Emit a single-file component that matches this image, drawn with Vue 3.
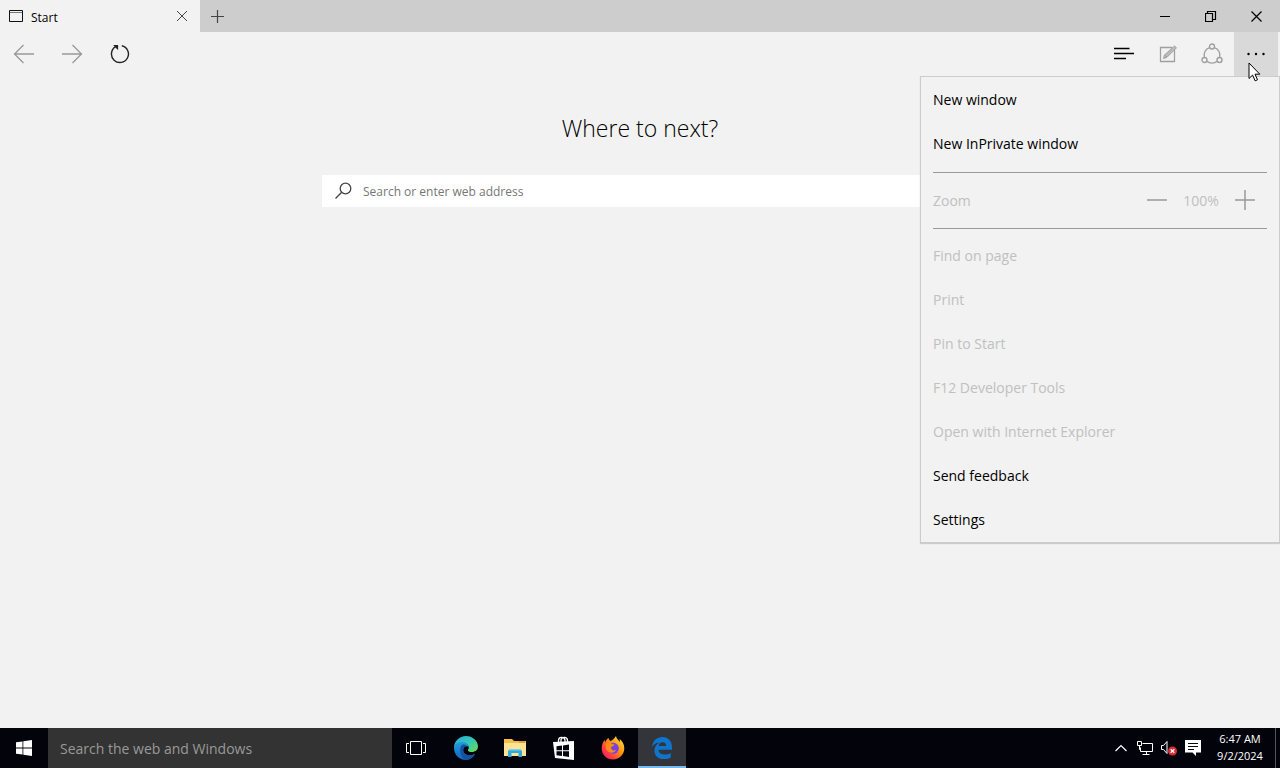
<template>
  <div class="desktop">
    <div class="titlebar">
      <div class="tab">
        <svg class="tab-icon" width="14" height="12" viewBox="0 0 14 12">
          <path d="M.5.5h13v11H.5z" fill="none" stroke="#111" />
          <path d="M1 2.500h12" stroke="#777" />
        </svg>
        <span class="tab-title">Start</span>
        <button class="tab-close" aria-label="Close tab">
          <svg width="12" height="12" viewBox="0 0 12 12"><path d="M1 1l10 10M11 1L1 11" fill="none" stroke="#444" /></svg>
        </button>
      </div>
      <button class="new-tab" aria-label="New tab">
        <svg width="13" height="13" viewBox="0 0 13 13"><path d="M6.500 0v13M0 6.500h13" stroke="#444" stroke-width="1.200" /></svg>
      </button>
      <div class="win-controls">
        <button aria-label="Minimize">
          <svg width="10" height="11" viewBox="0 0 10 11"><path d="M0 5.500h10" stroke="#000" /></svg>
        </button>
        <button aria-label="Restore">
          <svg width="12" height="11" viewBox="0 0 12 11">
            <path d="M.5 2.500h7v8h-7zM2.500 2.500v-2h8v8h-3" fill="none" stroke="#000" stroke-width="1.200" />
          </svg>
        </button>
        <button aria-label="Close">
          <svg width="12" height="11" viewBox="0 0 12 11"><path d="M.5.5l10 10M10.500.5l-10 10" stroke="#000" stroke-width="1.200" /></svg>
        </button>
      </div>
    </div>

    <div class="toolbar">
      <button class="nav" aria-label="Back" disabled>
        <svg width="22" height="20" viewBox="0 0 22 20"><path d="M21 10H1.500M10.500 1l-9 9 9 9" fill="none" stroke="#999" stroke-width="1.300" /></svg>
      </button>
      <button class="nav" aria-label="Forward" disabled>
        <svg width="22" height="20" viewBox="0 0 22 20"><path d="M1 10h19.500M11.500 1l9 9-9 9" fill="none" stroke="#999" stroke-width="1.300" /></svg>
      </button>
      <button class="nav" aria-label="Refresh">
        <svg width="20" height="20" viewBox="0 0 20 20">
          <path d="M11.800 1.700A8.500 8.500 0 1 1 5.600 2.700" fill="none" stroke="#222" stroke-width="1.400" />
          <path d="M3.200 1h4.900v4.900l-1.900-1.600z" fill="#222" />
        </svg>
      </button>
      <div class="tools">
        <button class="tool" aria-label="Hub">
          <svg width="20" height="16" viewBox="0 0 20 16"><path d="M0 2.500h15.500M0 7.500h20M0 12.500h12" stroke="#000" stroke-width="1.300" /></svg>
        </button>
        <button class="tool" aria-label="Make a Web Note" disabled>
          <svg width="18" height="18" viewBox="0 0 18 18" fill="none" stroke="#a0a0a0">
            <path d="M13 2.500H1.500v14h14V5" stroke-width="1.300" />
            <path d="M4.500 13.500l1-3.500L15.500 1l2 1.800L8 12.300z" fill="#bbb" />
            <path d="M5.500 10l2.500 2.300" />
          </svg>
        </button>
        <button class="tool" aria-label="Share" disabled>
          <svg width="22" height="22" viewBox="0 0 22 22" fill="none" stroke="#a0a0a0" stroke-width="1.400">
            <circle cx="11" cy="3.500" r="2.500" />
            <circle cx="3.500" cy="17" r="2.500" />
            <circle cx="18.500" cy="17" r="2.500" />
            <path d="M8.600 4.600A8 8 0 0 0 3.400 14.500M13.400 4.600a8 8 0 0 1 5.200 9.900M5.800 18.200a8 8 0 0 0 10.400 0" />
          </svg>
        </button>
        <div class="more">
          <button class="tool open" aria-label="More actions" aria-expanded="true">
            <svg width="18" height="4" viewBox="0 0 18 4">
              <circle cx="1.500" cy="2" r="1.200" /><circle cx="9" cy="2" r="1.200" /><circle cx="16.500" cy="2" r="1.200" />
            </svg>
          </button>
          <div class="menu">
            <template v-for="item in menuItems" :key="item.label">
              <div v-if="item.zoom" class="zoom">
                <span class="zoom-label">{{ item.label }}</span>
                <button aria-label="Zoom out" disabled>
                  <svg width="20" height="20" viewBox="0 0 20 20"><path d="M0 10h20" stroke="#999" stroke-width="1.500" /></svg>
                </button>
                <span class="zoom-value">100%</span>
                <button aria-label="Zoom in" disabled>
                  <svg width="20" height="20" viewBox="0 0 20 20"><path d="M0 10h20M10 0v20" stroke="#999" stroke-width="1.500" /></svg>
                </button>
              </div>
              <button v-else class="menu-item" :disabled="item.disabled">{{ item.label }}</button>
              <hr v-if="item.divider" />
            </template>
          </div>
          <svg class="cursor" width="13" height="20" viewBox="0 0 13 20">
            <path d="M1 1v15.500l3.600-3.400 2.500 5.700 2.400-1-2.500-5.600h4.800z" fill="#fff" stroke="#000" />
          </svg>
        </div>
      </div>
    </div>

    <main class="page">
      <h1>Where to next?</h1>
      <label class="address">
        <svg width="18" height="18" viewBox="0 0 18 18" fill="none" stroke="#444" stroke-width="1.300">
          <circle cx="11.500" cy="6.500" r="5.300" /><path d="M7.700 10.300L1.500 16.500" />
        </svg>
        <input type="text" placeholder="Search or enter web address" aria-label="Search or enter web address" />
      </label>
    </main>

    <div class="taskbar">
      <button class="start" aria-label="Start">
        <svg width="16" height="16" viewBox="0 0 16 16" fill="#fff">
          <path d="M0 2.300l6.500-.9v6.100H0zM7.300 1.300L16 0v7.500H7.300zM0 8.400h6.500v6.200L0 13.700zM7.300 8.400H16V16l-8.700-1.200z" />
        </svg>
      </button>
      <input class="task-search" type="text" placeholder="Search the web and Windows" aria-label="Search the web and Windows" />
      <div class="apps">
        <button class="app" aria-label="Task View">
          <svg width="22" height="16" viewBox="0 0 22 16" fill="none" stroke="#fff">
            <path d="M4.500 1.500h11v13h-11zM3 3.500H.5v9H3M17 3.500h2.500v9H17" />
          </svg>
        </button>
        <button class="app" aria-label="Microsoft Edge">
          <svg width="24" height="24" viewBox="0 0 24 24">
            <defs>
              <linearGradient id="edgeTop" x1="0" y1="0" x2="1" y2="1">
                <stop offset="0" stop-color="#25a9e0" /><stop offset=".5" stop-color="#35c8b4" /><stop offset="1" stop-color="#6fdc4b" />
              </linearGradient>
              <linearGradient id="edgeSide" x1="0" y1="0" x2="0" y2="1">
                <stop offset="0" stop-color="#209de0" /><stop offset="1" stop-color="#1265ba" />
              </linearGradient>
            </defs>
            <path d="M0 12C0 5 5.300 0 12 0s12 5 12 10.600c0 3.500-2.700 5.600-6 5.600-2.600 0-4.300-1-4.300-2 0-.7 1-1.200 1-2.900C14.700 9 12.500 7 9 7c-4.500 0-8 2.200-9 5z" fill="url(#edgeTop)" />
            <path d="M0 12c0-3.700 3.700-6 8-6 3.600 0 6.700 2 6.700 5-1-1.300-5.500-1-5.500 3.300 0 4.500 5.800 6.700 11.800 3.800C19 21.800 15.800 24 12 24 5 24 0 18.500 0 12z" fill="url(#edgeSide)" />
            <path d="M8.800 8.500C5 10.500 4.700 20.500 12 24c4 0 7-2.200 9-5.900-6 2.900-11.800.7-11.800-3.800 0-2.400 1.600-4 3.500-4.200-.7-1.100-2.300-1.800-3.900-1.600z" fill="#1552a0" />
            <path d="M10 12.300c.8-1.700 3-2 4.600-.9 0 1.500-.9 2-.9 2.800 0 1 1.700 2 4.300 2 1.500 0 2.800-.4 3.900-1.100-1 2.300-3.400 3.600-6.200 3.600-3.700 0-6.400-3-5.700-6.400z" fill="#03030c" />
          </svg>
        </button>
        <button class="app" aria-label="File Explorer">
          <svg width="22" height="20" viewBox="0 0 22 20">
            <path d="M0 1h8l2 2h12v15H0z" fill="#f5bf4a" />
            <path d="M0 5h22v13H0z" fill="#ffe394" />
            <path d="M15 3h6v2h-6z" fill="#eb9a35" />
            <path d="M4 19v-6l2-2h10l2 2v6h-3.500v-4h-7v4z" fill="#32a9de" />
            <path d="M6 11h10l1.500 1.500h-13z" fill="#78d2ef" />
          </svg>
        </button>
        <button class="app" aria-label="Store">
          <svg width="22" height="24" viewBox="0 0 22 24">
            <path d="M5.500 7V4.500C5.500.5 11 .3 12 4v3M8 6V3.500C9.500 0 14.500 1 14.500 4.500V6" fill="none" stroke="#fff" stroke-width="1.300" />
            <path d="M0 6l21-1v19L2 22z" fill="#fff" />
            <path d="M3.500 10.300l5.500-.7v4.700H3.500zM10 9.400l6-.8v5.700h-6zM3.500 15.200H9v4.700l-5.500-.7zM10 15.200h6v5.700l-6-.8z" fill="#050510" />
          </svg>
        </button>
        <button class="app" aria-label="Firefox">
          <svg width="24" height="24" viewBox="0 0 24 24">
            <defs>
              <linearGradient id="fox" x1="1" y1="0" x2="0" y2="1">
                <stop offset="0" stop-color="#fff44f" /><stop offset=".4" stop-color="#ff980e" /><stop offset=".75" stop-color="#ff3647" /><stop offset="1" stop-color="#e31587" />
              </linearGradient>
            </defs>
            <path d="M15 0c0 2.200 2.500 3.600 3.500 6 .5-1 .5-2-.1-3.300C21.500 5 23.300 8.500 23.300 12.300 23.300 18.700 18.300 23.500 12 23.500S.7 18.700.7 12.500C.7 9 2 6 3.700 3.800L4 6.500C5 5 5.600 3.300 7.500 1.800c0 1.500 1 2.700 2.300 3.200 1.400-.4 3.500-2.700 5.200-5z" fill="url(#fox)" />
            <circle cx="12.300" cy="12.300" r="5.500" fill="#7542e5" />
            <path d="M5 8c2-1.700 4.500-1.500 6 0l2.500.5c-.5 1.500-2.300 1.700-3.300 2.500-.5 3 2.700 4.500 5 2.500-1.200 4-7.700 4.800-10-.5z" fill="#ff8a16" />
          </svg>
        </button>
        <button class="app active" aria-label="Edge, Start">
          <svg width="22" height="22" viewBox="0 0 22 22">
            <path d="M1 10C1.800 3.500 6 0 11.400 0 17.500 0 21 4.500 21 10v2.700H7.500c.2 3.300 3 4.900 6.400 4.900 2.200 0 4-.6 5.900-1.700v4.500c-2 1.100-4.500 1.600-7.200 1.600C7 22 3.400 18.600 3.400 13.700c0-3.700 2-6.500 5-8.100C4.500 6 2.200 8 1 10zm6.600-1.100h7.500c0-2.300-1-3.600-3.400-3.600-2.200 0-3.700 1.500-4.100 3.600z" fill="#0f74cc" />
          </svg>
        </button>
      </div>
      <div class="tray">
        <button class="tray-icon" aria-label="Show hidden icons">
          <svg width="12" height="8" viewBox="0 0 12 8"><path d="M.5 7L6 1.500 11.500 7" fill="none" stroke="#fff" stroke-width="1.200" /></svg>
        </button>
        <button class="tray-icon" aria-label="Network">
          <svg width="16" height="14" viewBox="0 0 16 14" fill="none" stroke="#fff">
            <path d="M5.500 2.500h10v8H3.500v-4M9.500 10.500v3M5.500 13.500h7M.5.500h4v4h-4zM2.500 4.500v4h1" />
          </svg>
        </button>
        <button class="tray-icon" aria-label="Volume">
          <svg width="16" height="16" viewBox="0 0 16 16">
            <path d="M.5 5.500h2l3.500-4v12l-3.500-4h-2z" fill="none" stroke="#fff" />
            <circle cx="11.500" cy="11" r="4.500" fill="#d92c35" />
            <path d="M9.700 9.200l3.600 3.600M13.300 9.200l-3.600 3.600" stroke="#fff" stroke-width="1.300" />
          </svg>
        </button>
        <button class="tray-icon" aria-label="Notifications">
          <svg width="16" height="16" viewBox="0 0 16 16">
            <path d="M0 0h16v12.500h-5V16l-3.500-3.500H0z" fill="#fff" />
            <path d="M3 3.500h10M3 6.500h10M3 9.500h6" stroke="#08080f" />
          </svg>
        </button>
        <button class="clock"><span>6:47 AM</span><span>9/2/2024</span></button>
        <button class="show-desktop" aria-label="Show desktop"></button>
      </div>
    </div>
  </div>
</template>

<script setup>
const menuItems = [
  { label: 'New window' },
  { label: 'New InPrivate window', divider: true },
  { label: 'Zoom', zoom: true, divider: true },
  { label: 'Find on page', disabled: true },
  { label: 'Print', disabled: true },
  { label: 'Pin to Start', disabled: true },
  { label: 'F12 Developer Tools', disabled: true },
  { label: 'Open with Internet Explorer', disabled: true },
  { label: 'Send feedback' },
  { label: 'Settings' },
];
</script>

<style>
body {
  margin: 0;
}
</style>

<style scoped>
.desktop {
  display: flex;
  flex-direction: column;
  min-height: 100vh;
  background: #f2f2f2;
  color: #000;
  font-family: 'Open Sans', 'Noto Sans', sans-serif;
  font-size: 14px;
}

button,
input {
  margin: 0;
  padding: 0;
  border: 0;
  background: transparent;
  color: inherit;
  font: inherit;
}

svg {
  display: block;
  flex: none;
}

.titlebar,
.toolbar,
.tools,
.win-controls,
.taskbar,
.apps,
.tray {
  display: flex;
}

.titlebar {
  height: 32px;
  background: #cdcdcd;
}

.tab {
  display: flex;
  align-items: center;
  width: 200px;
  box-sizing: border-box;
  padding-left: 9px;
  background: #f2f2f2;
  font-size: 12px;
}

.tab-title {
  flex: 1;
  margin-left: 8px;
  padding-top: 2px;
}

.tab-close,
.new-tab,
.win-controls button,
.nav,
.tool,
.zoom button,
.start,
.app,
.tray-icon {
  display: flex;
  align-items: center;
  justify-content: center;
}

.tab-close {
  width: 36px;
  height: 32px;
}

.new-tab {
  width: 34px;
}

.win-controls {
  margin-left: auto;
}

.win-controls button {
  width: 46px;
}

.toolbar {
  height: 44px;
}

.nav {
  width: 48px;
}

.tools {
  margin-left: auto;
  padding-right: 2px;
}

.tool {
  width: 44px;
  height: 44px;
}

.tool.open {
  background: #d9d9d9;
}

.more {
  position: relative;
}

.menu {
  position: absolute;
  z-index: 1;
  top: 100%;
  right: -2px;
  width: 360px;
  box-sizing: border-box;
  padding-top: 1px;
  border: 1px solid #ccc;
  background: #f2f2f2;
  box-shadow: 0 1px 1px #ccc;
}

.menu-item {
  display: block;
  width: 100%;
  height: 44px;
  padding: 0 12px 2px;
  text-align: left;
}

.menu-item:disabled,
.zoom {
  color: #c0c0c0;
}

.menu hr {
  height: 1px;
  margin: 6px 12px 5px;
  border: 0;
  background: #999;
}

.zoom {
  display: flex;
  align-items: center;
  height: 44px;
  padding: 0 12px;
}

.zoom-label {
  flex: 1;
}

.zoom button,
.zoom-value {
  width: 44px;
  text-align: center;
}

.cursor {
  position: absolute;
  z-index: 2;
  top: 30px;
  left: 14px;
}

.page {
  display: flex;
  flex: 1;
  flex-direction: column;
  align-items: center;
  padding: 36px 20px 0;
}

h1 {
  margin: 0;
  font-size: 23px;
  font-weight: 300;
  line-height: 32px;
}

.address {
  display: flex;
  align-items: center;
  width: 100%;
  max-width: 636px;
  height: 32px;
  box-sizing: border-box;
  margin-top: 31px;
  padding-left: 12px;
  background: #fff;
}

.address input {
  flex: 1;
  margin-left: 11px;
  outline: 0;
  font-size: 12px;
}

.address input::placeholder {
  color: #767676;
}

.taskbar {
  height: 40px;
  background: #03030c;
  color: #fff;
}

.start {
  width: 48px;
}

.task-search {
  width: 344px;
  box-sizing: border-box;
  padding-left: 12px;
  background: #333;
}

.task-search::placeholder {
  color: #999;
}

.apps {
  gap: 1px;
  padding-left: 1px;
}

.app {
  width: 48px;
}

.app.active {
  background: #34353b;
  box-shadow: inset 0 -2px #76b9ed;
}

.tray {
  margin-left: auto;
}

.tray-icon {
  width: 24px;
}

.clock {
  display: flex;
  flex-direction: column;
  align-items: center;
  justify-content: center;
  width: 70px;
  padding-bottom: 2px;
  font-size: 11px;
  line-height: 17px;
}

.show-desktop {
  width: 5px;
  border-left: 1px solid #555;
}
</style>
